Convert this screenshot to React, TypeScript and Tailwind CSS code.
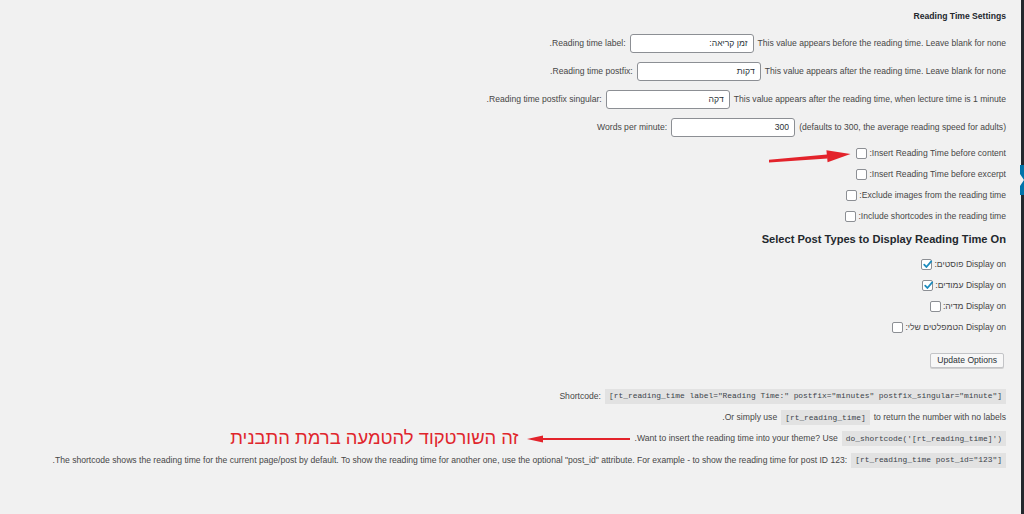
import React from 'react';

const textCls = 'text-[8.6px] text-[#474747] leading-none whitespace-nowrap';

function TextInput({ value }: { value: string }) {
  return (
    <input
      type="text"
      dir="rtl"
      readOnly
      defaultValue={value}
      className="w-[124px] h-[19px] rounded-[3px] border border-[#8c8f94] bg-white px-[5px] text-right text-[8.6px] text-[#2c3338] outline-none font-['Liberation_Sans',Arial,sans-serif]"
    />
  );
}

function Checkbox({ checked = false }: { checked?: boolean }) {
  return (
    <span className="relative inline-flex h-[11px] w-[11px] shrink-0 items-center justify-center rounded-[2px] border border-[#8c8f94] bg-white">
      {checked && (
        <svg width="11" height="11" viewBox="0 0 11 11" className="absolute -top-[1px] left-0">
          <path d="M2.2 5.6 L4.4 8 L9.2 2.4" fill="none" stroke="#1e8cbe" strokeWidth="1.8" strokeLinecap="round" strokeLinejoin="round" />
        </svg>
      )}
    </span>
  );
}

function Code({ children }: { children: React.ReactNode }) {
  return (
    <code className="inline-flex h-[15px] items-center bg-[#e2e2e2] px-[4px] text-[7.9px] text-[#3c434a] leading-none whitespace-pre font-['Liberation_Mono','Courier_New',monospace]">
      {children}
    </code>
  );
}

function FieldRow({ label, value, desc }: { label: string; value: string; desc: string }) {
  return (
    <div className="flex h-[28px] items-center justify-end gap-[4px]">
      <span className={textCls}>{label}</span>
      <TextInput value={value} />
      <span className={textCls}>{desc}</span>
    </div>
  );
}

function CheckRow({ label, checked, rtl }: { label: string; checked?: boolean; rtl?: boolean }) {
  return (
    <div className="flex h-[21px] items-center justify-end gap-[2px]">
      <Checkbox checked={checked} />
      <span className={textCls} dir={rtl ? 'rtl' : 'ltr'}>
        {label}
      </span>
    </div>
  );
}

function BigArrow() {
  // red annotation arrow pointing at the first checkbox
  return (
    <svg width="84" height="20" viewBox="0 0 84 20" className="shrink-0 mr-[3px]">
      <polygon points="2,15.8 60,10.4 60.6,14.6 2,18.6" fill="#e3232b" />
      <polygon points="59.4,6.2 83.5,10 60.6,18.2" fill="#e3232b" />
    </svg>
  );
}

function ThinArrow() {
  return (
    <svg width="104" height="10" viewBox="0 0 104 10" className="shrink-0">
      <line x1="14" y1="5" x2="103" y2="5" stroke="#e3232b" strokeWidth="2" />
      <polygon points="0,5 16,1.6 16,8.4" fill="#e3232b" />
    </svg>
  );
}

export default function App() {
  return (
    <div className="flex h-[514px] w-[1024px] overflow-hidden bg-[#f1f1f1] font-['Liberation_Sans',Arial,sans-serif]">
      <div className="flex flex-1 flex-col pr-[15px]">
        {/* Settings title */}
        <div className="flex h-[29px] items-center justify-end pt-[3px]">
          <span className="text-[8.6px] font-bold text-[#23282d] leading-none">Reading Time Settings</span>
        </div>

        <FieldRow
          label=".Reading time label:"
          value="זמן קריאה:"
          desc="This value appears before the reading time. Leave blank for none"
        />
        <FieldRow
          label=".Reading time postfix:"
          value="דקות"
          desc="This value appears after the reading time. Leave blank for none"
        />
        <FieldRow
          label=".Reading time postfix singular:"
          value="דקה"
          desc="This value appears after the reading time, when lecture time is 1 minute"
        />
        <FieldRow label="Words per minute:" value="300" desc="(defaults to 300, the average reading speed for adults)" />

        <div className="mt-[2px]">
          <div className="flex h-[21px] items-center justify-end gap-[2px]">
            <BigArrow />
            <Checkbox />
            <span className={textCls}>:Insert Reading Time before content</span>
          </div>
          <CheckRow label=":Insert Reading Time before excerpt" />
          <CheckRow label=":Exclude images from the reading time" />
          <CheckRow label=":Include shortcodes in the reading time" />
        </div>

        {/* Post types */}
        <div className="flex h-[26px] items-center justify-end">
          <span className="text-[11.1px] font-bold text-[#23282d] leading-none">Select Post Types to Display Reading Time On</span>
        </div>
        <div className="mt-[1px]">
          <CheckRow label="Display on פוסטים:" checked rtl />
          <CheckRow label="Display on עמודים:" checked rtl />
          <CheckRow label="Display on מדיה:" rtl />
          <CheckRow label="Display on הטמפלטים שלי:" rtl />
        </div>

        <div className="flex h-[44px] items-center justify-end pr-[2px]">
          <button className="h-[15px] rounded-[2px] border border-[#c3c4c7] bg-[#f7f7f7] px-[6px] text-[8.6px] text-[#2c3338] leading-none shadow-[0_1px_0_#d0d0d0]">
            Update Options
          </button>
        </div>

        {/* Shortcode help */}
        <div className="mt-[3px]">
          <div className="flex h-[22px] items-center justify-end gap-[4px]">
            <span className={textCls}>Shortcode:</span>
            <Code>[rt_reading_time label="Reading Time:" postfix="minutes" postfix_singular="minute"]</Code>
          </div>
          <div className="flex h-[21px] items-center justify-end gap-[4px]">
            <span className={textCls}>.Or simply use</span>
            <Code>[rt_reading_time]</Code>
            <span className={textCls}>to return the number with no labels</span>
          </div>
          <div className="flex h-[21px] items-center justify-end gap-[4px]">
            <span dir="rtl" className="mr-[4px] text-[18.4px] leading-none text-[#e0262c] whitespace-nowrap">
              זה השורטקוד להטמעה ברמת התבנית
            </span>
            <ThinArrow />
            <span className={textCls}>.Want to insert the reading time into your theme? Use</span>
            <Code>do_shortcode('[rt_reading_time]')</Code>
          </div>
          <div className="flex h-[22px] items-center justify-end gap-[4px]">
            <span className={textCls}>
              .The shortcode shows the reading time for the current page/post by default. To show the reading time for
              another one, use the optional "post_id" attribute. For example - to show the reading time for post ID 123:
            </span>
            <Code>[rt_reading_time post_id="123"]</Code>
          </div>
        </div>
      </div>

      {/* admin menu edge */}
      <div className="relative w-[3px] bg-[#23282d]">
        <div className="absolute right-0 top-[165px] h-[30px] w-[4px] bg-[#0073aa]" />
        <div className="absolute -left-[1px] top-[174px] h-0 w-0 border-y-[6px] border-l-[4px] border-y-transparent border-l-[#f1f1f1]" />
      </div>
    </div>
  );
}
